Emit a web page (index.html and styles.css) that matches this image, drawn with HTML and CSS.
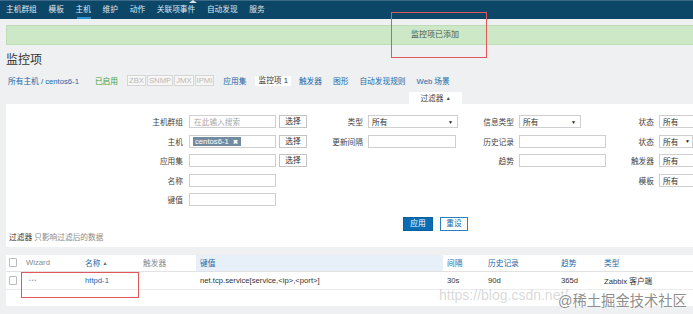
FILE: index.html
```html
<!DOCTYPE html>
<html lang="zh">
<head>
<meta charset="utf-8">
<title>监控项</title>
<link rel="stylesheet" href="styles.css">
</head>
<body>
<div class="page">
  <nav class="topnav">
    <span class="notch"></span>
    <a class="nav-item">主机群组</a>
    <a class="nav-item">模板</a>
    <a class="nav-item active">主机</a>
    <a class="nav-item">维护</a>
    <a class="nav-item">动作</a>
    <a class="nav-item">关联项事件</a>
    <a class="nav-item">自动发现</a>
    <a class="nav-item">服务</a>
  </nav>

  <div class="msg">监控项已添加</div>

  <h1 class="title">监控项</h1>

  <div class="crumbs">
    <a class="link bc">所有主机 / centos6-1</a>
    <span class="enabled">已启用</span>
    <span class="avail"><span class="av">ZBX</span><span class="av">SNMP</span><span class="av">JMX</span><span class="av">IPMI</span></span>
    <a class="link t-app">应用集</a>
    <span class="cur">监控项 1</span>
    <a class="link t-trig">触发器</a>
    <a class="link t-graph">图形</a>
    <a class="link t-disc">自动发现规则</a>
    <a class="link t-web">Web 场景</a>
  </div>

  <div class="filter-tabs"><span class="ftab">过滤器 <span class="arr">▲</span></span></div>

  <section class="filter">
    <div class="cols">
      <div class="col c1">
        <div class="row"><label>主机群组</label><span class="inp ph">在此输入搜索</span><span class="btn">选择</span></div>
        <div class="row"><label>主机</label><span class="inp"><span class="tag">centos6-1 <b>✖</b></span></span><span class="btn">选择</span></div>
        <div class="row"><label>应用集</label><span class="inp"></span><span class="btn">选择</span></div>
        <div class="row"><label>名称</label><span class="inp"></span></div>
        <div class="row"><label>键值</label><span class="inp"></span></div>
      </div>
      <div class="col c2">
        <div class="row"><label>类型</label><span class="sel">所有<i>▼</i></span></div>
        <div class="row"><label>更新间隔</label><span class="inp"></span></div>
      </div>
      <div class="col c3">
        <div class="row"><label>信息类型</label><span class="sel">所有<i>▼</i></span></div>
        <div class="row"><label>历史记录</label><span class="inp"></span></div>
        <div class="row"><label>趋势</label><span class="inp"></span></div>
      </div>
      <div class="col c4">
        <div class="row"><label>状态</label><span class="sel open">所有</span></div>
        <div class="row"><label>状态</label><span class="sel narrow">所有<i>▼</i></span></div>
        <div class="row"><label>触发器</label><span class="sel open">所有</span></div>
        <div class="row"><label>模板</label><span class="sel open">所有</span></div>
      </div>
    </div>
    <div class="actions">
      <span class="btn-primary">应用</span>
      <span class="btn-alt">重设</span>
    </div>
    <div class="subfilter"><strong>过滤器</strong> 只影响过滤后的数据</div>
  </section>

  <table class="list">
    <colgroup>
      <col class="w-chk"><col class="w-wiz"><col class="w-name"><col class="w-trig"><col class="w-key"><col class="w-int"><col class="w-hist"><col class="w-trend"><col>
    </colgroup>
    <thead>
      <tr>
        <th><span class="cb"></span></th>
        <th class="muted">Wizard</th>
        <th class="link">名称 <span class="sort">▲</span></th>
        <th class="muted">触发器</th>
        <th class="link hl">键值</th>
        <th class="link">间隔</th>
        <th class="link">历史记录</th>
        <th class="link">趋势</th>
        <th class="link">类型</th>
      </tr>
    </thead>
    <tbody>
      <tr>
        <td><span class="cb"></span></td>
        <td class="muted dots">•••</td>
        <td class="link">httpd-1</td>
        <td></td>
        <td>net.tcp.service[service,&lt;ip&gt;,&lt;port&gt;]</td>
        <td>30s</td>
        <td>90d</td>
        <td>365d</td>
        <td>Zabbix 客户端</td>
      </tr>
      <tr class="blank"><td colspan="9"></td></tr>
    </tbody>
  </table>

  <div class="mark mark-msg"></div>
  <div class="mark mark-row"></div>
  <div class="wm-url">https://blog.csdn.net/</div>
  <div class="wm-juejin">@稀土掘金技术社区</div>
</div>
</body>
</html>
```

FILE: styles.css
```css
* { box-sizing: border-box; }
html, body { margin: 0; padding: 0; }
body {
  background: #eef0f1;
  font-family: "Liberation Sans", "Noto Sans CJK SC", sans-serif;
  font-size: 7.7px;
  color: #333;
  width: 693px;
  height: 314px;
  overflow: hidden;
}
.page { position: relative; height: 314px; }

.link { color: #1d68a8; }
.muted { color: #888; }

/* top nav */
.topnav {
  position: relative;
  height: 19px;
  background: #0d4768;
  border-top: 1px solid #3d6a88;
  display: flex;
  align-items: center;
  gap: 11.7px;
  padding-left: 6px;
}
.notch {
  position: absolute;
  left: 189px;
  top: -1px;
  width: 0; height: 0;
  border-left: 4px solid transparent;
  border-right: 4px solid transparent;
  border-bottom: 3px solid #dfe7ee;
}
.nav-item { color: #dfe8ef; position: relative; line-height: 18px; }
.nav-item.active::after {
  content: "";
  position: absolute;
  left: 1px; right: 0; bottom: 0;
  height: 2px;
  background: #2a93d5;
}

/* message */
.msg {
  margin: 6px 0 0 6px;
  height: 20px;
  background: #cde8c6;
  border: 1px solid #bedcb5;
  border-right: none;
  padding-left: 404px;
  font-size: 8px;
  line-height: 18px;
  color: #4b5a4a;
}

.title {
  margin: 8px 0 0 6px;
  font-size: 12px;
  line-height: 14px;
  font-weight: normal;
  color: #333;
}

/* breadcrumbs / host tabs */
.crumbs {
  margin: 8px 0 0 8px;
  height: 11px;
  display: flex;
  align-items: center;
}
.bc { margin-right: 16px; }
.enabled { color: #3f9e3a; margin-right: 9px; }
.avail { display: flex; margin-right: 8px; }
.av {
  border: 1px solid #d6d6d6;
  color: #b8b8b8;
  padding: 0 1px;
  line-height: 9px;
  margin-right: 1px;
  background: #f6f6f6;
}
.t-app { margin-right: 9px; }
.cur {
  background: #fff;
  padding: 0 3px;
  line-height: 10px;
  color: #333;
  margin-right: 8px;
}
.t-trig { margin-right: 11px; }
.t-graph { margin-right: 11px; }
.t-disc { margin-right: 11px; }

/* filter */
.filter-tabs { margin-top: 6px; height: 12px; padding-left: 409px; }
.ftab {
  display: inline-block;
  width: 53px;
  height: 12px;
  background: #fff;
  text-align: center;
  line-height: 13px;
  color: #444;
}
.arr { font-size: 5px; vertical-align: 1px; }

.filter {
  margin-left: 6px;
  background: #fff;
  height: 143px;
  padding-top: 8px;
}
.cols { display: flex; }
.col { display: flex; flex-direction: column; }
.row { height: 19.5px; display: flex; align-items: center; }
.row label { text-align: right; color: #444; }
.c1 label { width: 177px; margin-right: 6px; }
.c2 label, .c3 label { width: 56px; margin-right: 5px; }
.c4 label { width: 48px; margin-right: 5px; }

.inp, .sel {
  height: 13px;
  border: 1px solid #cfcfcf;
  background: #fff;
  display: flex;
  align-items: center;
  padding-left: 3px;
}
.c1 .inp { width: 87px; margin-right: 3px; }
.c2 .inp { width: 88px; }
.c3 .inp { width: 87px; }
.ph { color: #aaa; padding-left: 4px; }
.tag {
  background: #728ba0;
  color: #fff;
  height: 9px;
  line-height: 9px;
  padding: 0 3px 0 2px;
  white-space: nowrap;
}
.tag b { font-size: 6px; margin-left: 2px; }
.btn {
  width: 28px;
  height: 13px;
  border: 1px solid #c4c4c4;
  background: #fff;
  text-align: center;
  line-height: 11px;
  color: #333;
}
.sel { justify-content: space-between; padding-right: 4px; color: #333; }
.sel i { font-style: normal; font-size: 5px; color: #222; }
.c2 .sel { width: 90px; }
.c3 .sel { width: 62px; }
.c4 .sel { width: 35px; }
.c4 .sel.open { border-right: none; }
.c4 .sel.narrow { width: 34px; padding-right: 2px; }

.actions {
  margin-top: 7.5px;
  padding-left: 397px;
  display: flex;
  gap: 7px;
}
.btn-primary, .btn-alt {
  height: 14px;
  line-height: 12px;
  text-align: center;
}
.btn-primary {
  width: 30px;
  background: #0b6bb3;
  border: 1px solid #0a5f9f;
  color: #fff;
}
.btn-alt {
  width: 28px;
  background: #fff;
  border: 1px solid #2a7fc0;
  color: #1d68a8;
}
.subfilter {
  margin-top: 2px;
  padding-left: 3px;
  line-height: 9px;
  color: #8a8a8a;
}
.subfilter strong { font-weight: normal; color: #333; }

/* list table */
.list {
  margin: 8px 0 0 6px;
  width: 687px;
  border-collapse: collapse;
  table-layout: fixed;
  background: #fff;
}
.w-chk { width: 16px; }
.w-wiz { width: 59px; }
.w-name { width: 58px; }
.w-trig { width: 57px; }
.w-key { width: 247px; }
.w-int { width: 41px; }
.w-hist { width: 73px; }
.w-trend { width: 43px; }
.list th, .list td {
  text-align: left;
  font-weight: normal;
  padding: 0 0 0 4px;
  white-space: nowrap;
  overflow: hidden;
}
.list th:first-child, .list td:first-child { padding-left: 3px; }
.list thead tr { height: 16px; border-bottom: 1px solid #e2e2e2; }
.list tbody tr { height: 18px; border-bottom: 1px solid #ececec; }
.list tbody tr.blank { height: 17px; border-bottom: none; }
.list th.hl { background: #e7f0f8; }
.sort { font-size: 5px; color: #666; vertical-align: 1px; }
.cb {
  display: block;
  width: 8px;
  height: 9px;
  border: 1px solid #bcbcbc;
  border-radius: 1px;
  background: #fff;
}
.dots { color: #9a9a9a; font-size: 5px; letter-spacing: 1px; padding-left: 7px !important; }

/* annotations / watermark overlays */
.mark { position: absolute; border: 1px solid #e2575b; }
.mark-msg { left: 391px; top: 12px; width: 96px; height: 46px; }
.mark-row { left: 21px; top: 272px; width: 118px; height: 26px; }
.wm-url {
  position: absolute;
  left: 439px;
  top: 287px;
  font-size: 14px;
  color: rgba(170, 170, 170, 0.45);
  white-space: nowrap;
}
.wm-juejin {
  position: absolute;
  left: 558px;
  top: 289px;
  font-size: 14.3px;
  color: #8e8e8e;
  white-space: nowrap;
  text-shadow: 0 0 1px #fff, 0 0 2px #fff;
}
```
